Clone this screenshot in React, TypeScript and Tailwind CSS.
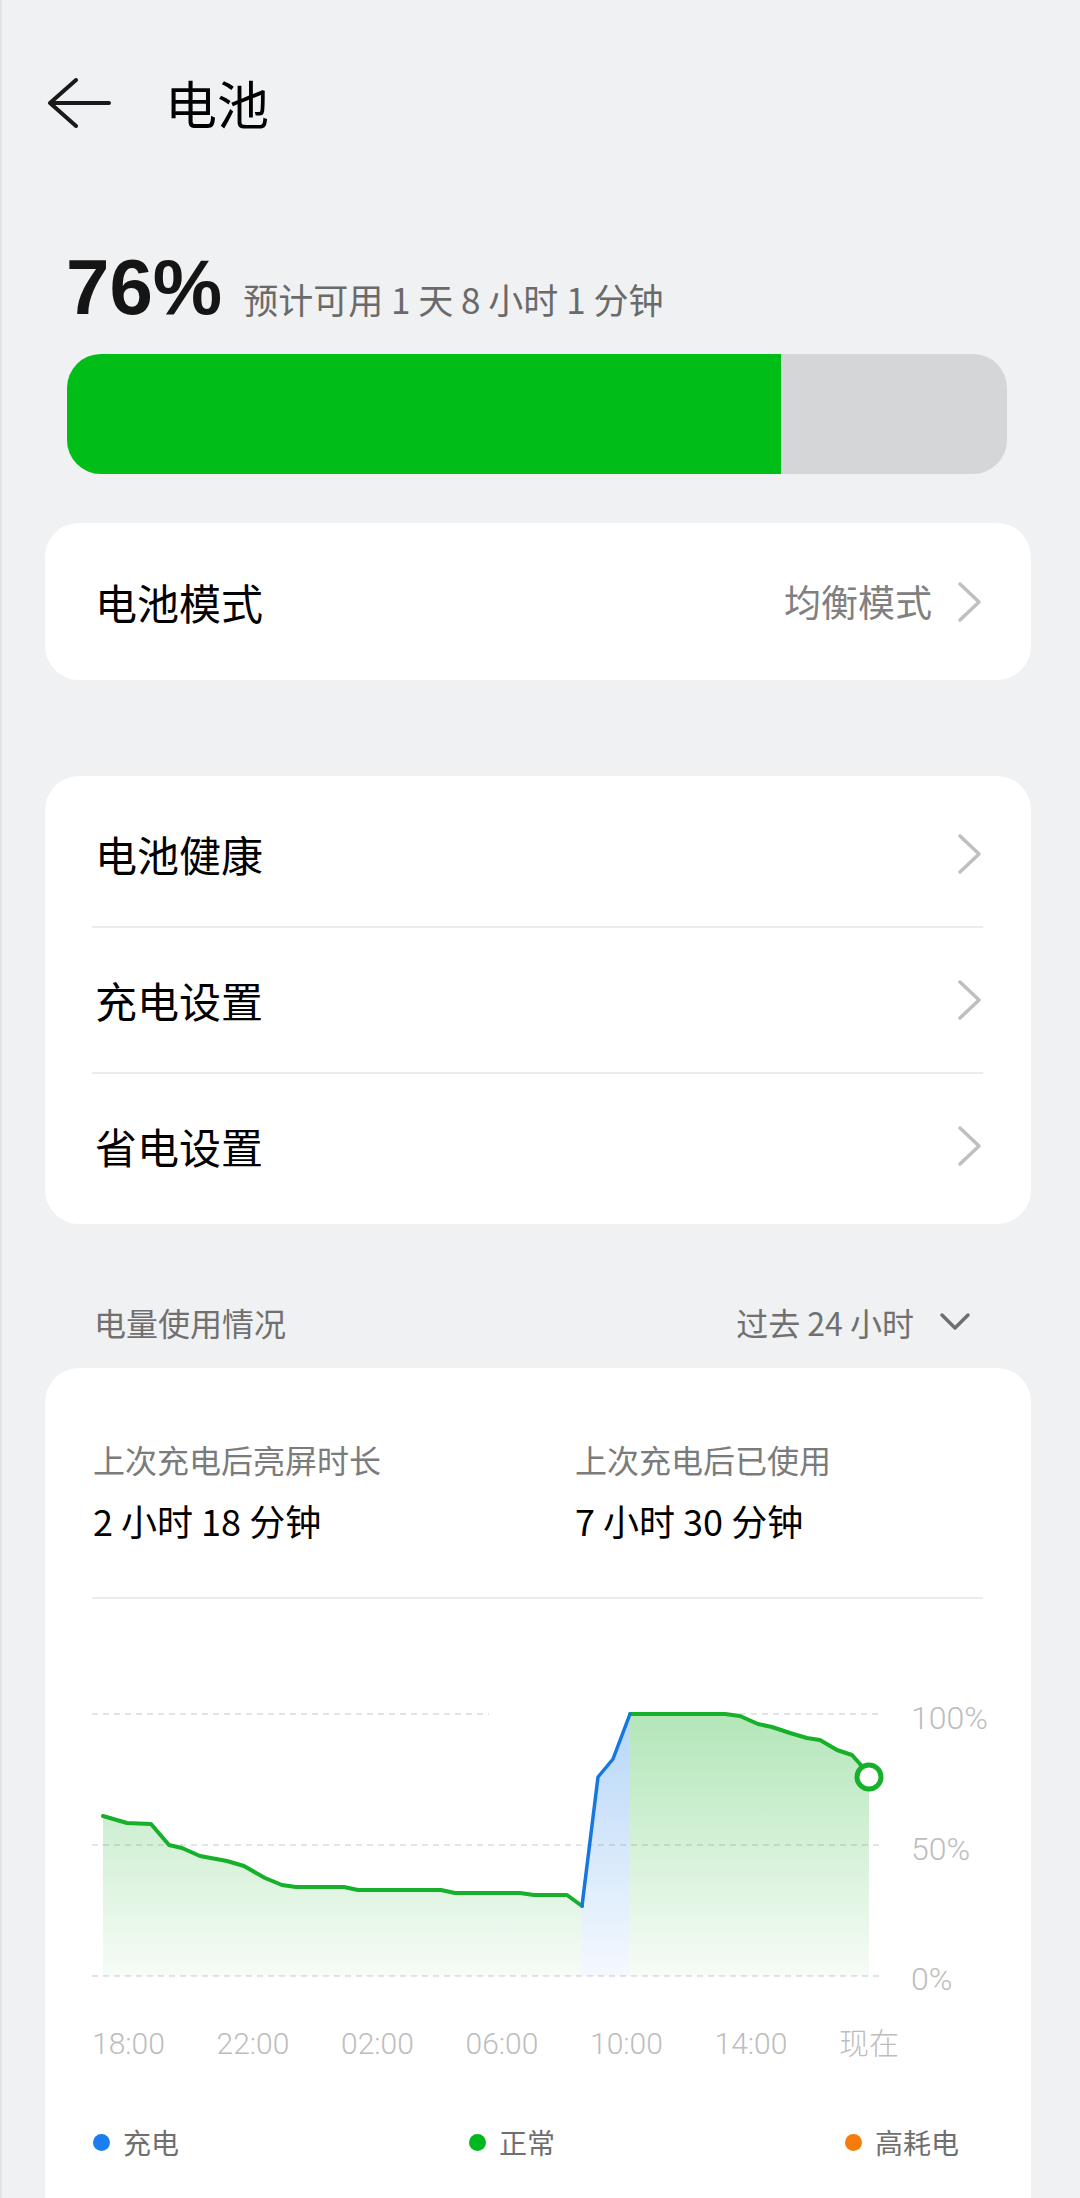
import React from "react";

const green1 =
  "103,1815 127,1822 151,1823 169,1844 182,1847 200,1855 227,1860 244,1865 265,1877 282,1884 296,1886 344,1886 358,1889 441,1889 455,1892 520,1892 534,1894 567,1894 582,1905";
const blue = "582,1905 598,1776 613,1758 630,1713";
const green2 =
  "630,1713 725,1713 740,1715 758,1723 772,1726 790,1732 807,1737 820,1739 837,1749 852,1754 860,1763 869,1776";

function ChevronRight() {
  return (
    <svg width="26" height="42" viewBox="0 0 26 42" className="block">
      <path d="M3 3L22 21L3 39" fill="none" stroke="#bfbfbf" strokeWidth="3.5" strokeLinecap="round" strokeLinejoin="round" />
    </svg>
  );
}

function Row({ title }: { title: string }) {
  return (
    <div className="h-[144px] flex items-center justify-between pl-[50px] pr-[48px]">
      <span className="text-[42px] leading-none text-[#000000]">{title}</span>
      <ChevronRight />
    </div>
  );
}

function Chart() {
  return (
    <svg width="986" height="408" viewBox="45 1598 986 408" className="block">
      <defs>
        <linearGradient id="gfill" x1="0" y1="1713" x2="0" y2="1975" gradientUnits="userSpaceOnUse">
          <stop offset="0" stopColor="#1fb52f" stopOpacity="0.34" />
          <stop offset="1" stopColor="#1fb52f" stopOpacity="0.04" />
        </linearGradient>
        <linearGradient id="bfill" x1="0" y1="1713" x2="0" y2="1975" gradientUnits="userSpaceOnUse">
          <stop offset="0" stopColor="#2a86ea" stopOpacity="0.34" />
          <stop offset="1" stopColor="#2a86ea" stopOpacity="0.05" />
        </linearGradient>
      </defs>
      <line x1="92" y1="1713" x2="489" y2="1713" stroke="#dcdcdc" strokeWidth="1.5" strokeDasharray="6 5" />
      <line x1="630" y1="1713" x2="880" y2="1713" stroke="#dcdcdc" strokeWidth="1.5" strokeDasharray="6 5" />
      <line x1="92" y1="1844" x2="880" y2="1844" stroke="#dcdcdc" strokeWidth="1.5" strokeDasharray="6 5" />
      <line x1="92" y1="1975" x2="880" y2="1975" stroke="#dcdcdc" strokeWidth="1.5" strokeDasharray="6 5" />
      <polygon points={`103,1975 ${green1} 582,1975`} fill="url(#gfill)" />
      <polygon points={`582,1975 ${blue} 630,1975`} fill="url(#bfill)" />
      <polygon points={`630,1975 ${green2} 869,1975`} fill="url(#gfill)" />
      <polyline points={green1} fill="none" stroke="#17b02a" strokeWidth="4" strokeLinejoin="round" strokeLinecap="round" />
      <polyline points={green2} fill="none" stroke="#17b02a" strokeWidth="4" strokeLinejoin="round" strokeLinecap="round" />
      <polyline points={blue} fill="none" stroke="#1677e0" strokeWidth="3.5" strokeLinejoin="round" strokeLinecap="round" />
      <circle cx="869" cy="1776" r="12" fill="#ffffff" stroke="#17b02a" strokeWidth="5" />
      <g fontFamily="Roboto, 'Noto Sans', sans-serif" fontWeight="300" fontSize="32" fill="#bdbdbd">
        <text x="911" y="1717" dominantBaseline="central">100%</text>
        <text x="911" y="1848" dominantBaseline="central">50%</text>
        <text x="911" y="1978" dominantBaseline="central">0%</text>
      </g>
    </svg>
  );
}

function Legend({ color, label }: { color: string; label: string }) {
  return (
    <div className="flex items-center gap-[13px]">
      <span className={`block w-[17px] h-[17px] rounded-full ${color}`} />
      <span>{label}</span>
    </div>
  );
}

export default function App() {
  return (
    <div className="w-[1080px] h-[2198px] overflow-hidden bg-[#f0f1f3] border-l-2 border-[#e2e3e5] font-['Noto_Sans_CJK_SC',sans-serif]">
      <div className="flex items-center h-[206px] pl-[45px]">
        <svg width="64" height="50" viewBox="0 0 64 50" className="block">
          <path d="M62 25H3M29 2L3 25L29 48" fill="none" stroke="#1a1a1a" strokeWidth="4" strokeLinecap="round" strokeLinejoin="round" />
        </svg>
        <span className="ml-[54px] text-[52px] leading-none text-[#000000]">电池</span>
      </div>

      <div className="mt-[42px] pl-[64px] flex items-baseline">
        <span className="font-['Liberation_Sans',sans-serif] font-bold text-[78px] leading-none text-[#151515]">76%</span>
        <span className="ml-[21px] text-[35px] leading-none text-[#6a6a6a]">预计可用 1 天 8 小时 1 分钟</span>
      </div>
      <div className="ml-[65px] mt-[28px] w-[940px] h-[120px] rounded-[34px] bg-[#d5d6d8] overflow-hidden">
        <div className="h-full w-[76%] bg-[#00bd18]" />
      </div>

      <div className="ml-[43px] mt-[49px] w-[986px] h-[157px] rounded-[34px] bg-white flex items-center justify-between pl-[50px] pr-[48px]">
        <span className="text-[42px] leading-none text-[#000000]">电池模式</span>
        <div className="flex items-center">
          <span className="text-[37px] leading-none text-[#808080]">均衡模式</span>
          <span className="ml-[25px]">
            <ChevronRight />
          </span>
        </div>
      </div>

      <div className="ml-[43px] mt-[96px] w-[986px] rounded-[34px] bg-white py-[6px]">
        <Row title="电池健康" />
        <div className="ml-[47px] mr-[48px] h-[2px] bg-[#ebebeb]" />
        <Row title="充电设置" />
        <div className="ml-[47px] mr-[48px] h-[2px] bg-[#ebebeb]" />
        <Row title="省电设置" />
      </div>

      <div className="ml-[43px] w-[986px] mt-[58px] h-[80px] flex items-center justify-between pl-[49px] pr-[59px]">
        <span className="text-[32px] leading-none text-[#707070]">电量使用情况</span>
        <div className="flex items-center">
          <span className="text-[32px] leading-none text-[#707070]">过去 24 小时</span>
          <svg width="34" height="22" viewBox="0 0 34 22" className="block ml-[24px]">
            <path d="M4 4L17 17L30 4" fill="none" stroke="#6f6f6f" strokeWidth="3.5" strokeLinecap="round" strokeLinejoin="round" />
          </svg>
        </div>
      </div>

      <div className="ml-[43px] mt-[6px] w-[986px] rounded-t-[34px] bg-white pt-[75px] pb-[100px]">
        <div className="flex pl-[48px]">
          <div className="w-[482px]">
            <div className="text-[32px] leading-none text-[#7b7b7b]">上次充电后亮屏时长</div>
            <div className="mt-[27px] text-[36px] leading-none text-[#000000]">2 小时 18 分钟</div>
          </div>
          <div>
            <div className="text-[32px] leading-none text-[#7b7b7b]">上次充电后已使用</div>
            <div className="mt-[27px] text-[36px] leading-none text-[#000000]">7 小时 30 分钟</div>
          </div>
        </div>
        <div className="mt-[59px] ml-[47px] mr-[48px] h-[2px] bg-[#ececec]" />
        <Chart />
        <div className="mt-[22px] ml-[47px] w-[807px] flex justify-between font-['Roboto','Noto_Sans_CJK_SC',sans-serif] font-light text-[30px] leading-none text-[#bdbdbd]">
          <span>18:00</span>
          <span>22:00</span>
          <span>02:00</span>
          <span>06:00</span>
          <span>10:00</span>
          <span>14:00</span>
          <span>现在</span>
        </div>
        <div className="mt-[69px] ml-[48px] w-[866px] flex justify-between text-[28px] leading-none text-[#6f6f6f]">
          <Legend color="bg-[#1a7df0]" label="充电" />
          <Legend color="bg-[#00b81e]" label="正常" />
          <Legend color="bg-[#f57c0a]" label="高耗电" />
        </div>
      </div>
    </div>
  );
}
